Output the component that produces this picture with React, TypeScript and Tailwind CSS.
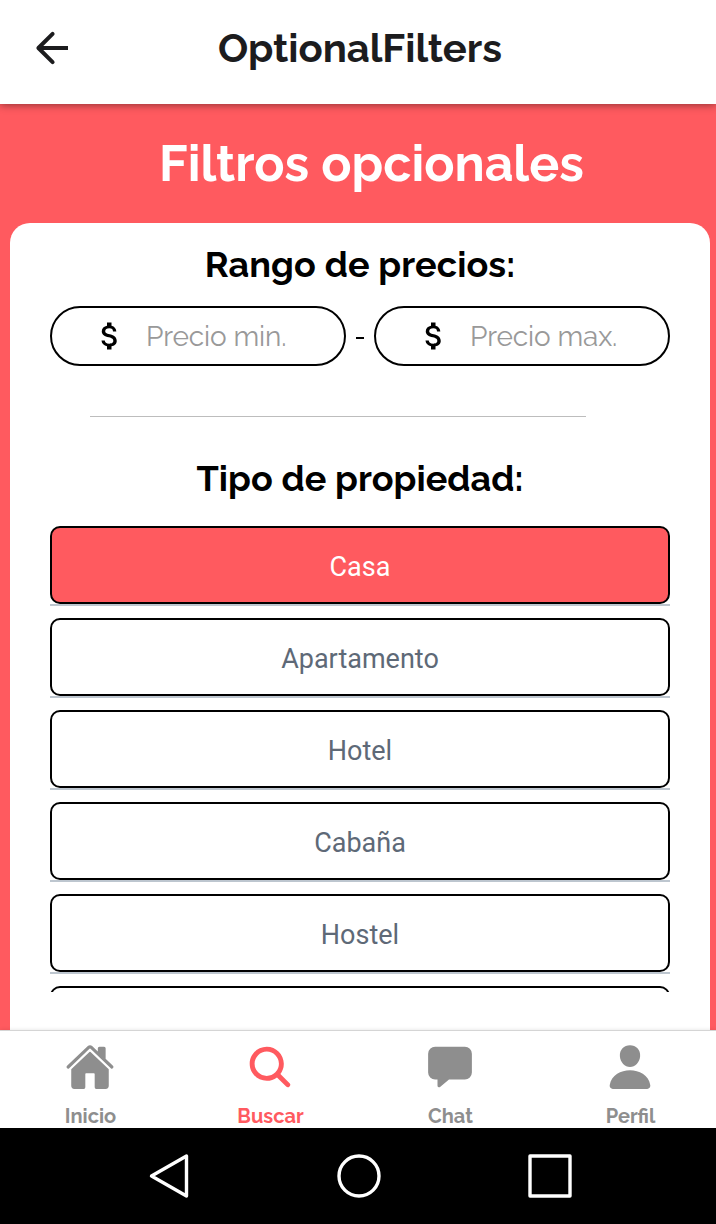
import React from "react";
import { MdAttachMoney } from "react-icons/md";
import { IoHome, IoSearch, IoChatbox, IoPerson } from "react-icons/io5";

const types = ["Casa", "Apartamento", "Hotel", "Cabaña", "Hostel", ""];

const tabs = [
  { label: "Inicio", Icon: IoHome },
  { label: "Buscar", Icon: IoSearch },
  { label: "Chat", Icon: IoChatbox },
  { label: "Perfil", Icon: IoPerson },
];

function PriceInput({ label }: { label: string }) {
  return (
    <div className="flex h-[60px] w-[296px] items-center rounded-full border-2 border-black pl-10">
      <MdAttachMoney className="size-9 shrink-0" />
      <span className="ml-[18px] mt-0.5 whitespace-nowrap text-[28px] leading-8 tracking-[-0.15px] text-[#999999]">{label}</span>
    </div>
  );
}

export default function App() {
  return (
    <div className="flex h-[1224px] w-[716px] flex-col overflow-hidden bg-[#ff5a5f] font-['Raleway','Lato',sans-serif] text-black">
      <header className="relative z-10 flex h-[104px] shrink-0 items-center bg-white pb-2 pl-7 shadow-[0_1px_8px_rgba(0,0,0,0.45)]">
        <svg viewBox="0 0 48 48" className="size-12 shrink-0" fill="none" stroke="#1c1c1e" strokeWidth="4">
          <path d="M40 24H11" />
          <path d="M24.6 9.8 10.4 24l14.2 14.2" strokeLinejoin="round" strokeLinecap="round" />
        </svg>
        <h1 className="ml-[142px] whitespace-nowrap text-[40px] font-bold leading-[48px] tracking-[-0.05px] text-[#1c1c1e]">OptionalFilters</h1>
      </header>

      <main className="flex min-h-0 flex-1 flex-col">
        <h2 className="ml-[159px] mt-[30px] h-[60px] whitespace-nowrap text-[50px] font-bold leading-[60px] text-white">Filtros opcionales</h2>
        <section className="ml-[10px] mt-[29px] flex min-h-0 w-[700px] flex-1 flex-col rounded-t-[20px] bg-white px-10">
          <h3 className="mt-[19px] text-center text-[36px] font-bold leading-[44px] tracking-[0.1px]">Rango de precios:</h3>
          <div className="mt-5 flex items-center justify-between">
            <PriceInput label="Precio min." />
            <span className="mt-1 h-[2px] w-2 bg-black" />
            <PriceInput label="Precio max." />
          </div>
          <div className="ml-10 mt-[50px] h-px w-[496px] shrink-0 bg-[#bdbdbd]" />
          <h3 className="mt-[39px] text-center text-[36px] font-bold leading-[44px] tracking-[0.05px]">Tipo de propiedad:</h3>
          <ul className="mt-[26px] flex h-[466px] shrink-0 flex-col gap-3 overflow-hidden">
            {types.map((t, i) => (
              <li key={i} className="h-20 shrink-0 border-b-2 border-[#bdc6cf]">
                <button
                  className={
                    "flex h-[78px] w-full items-center justify-center rounded-[10px] border-2 border-black pt-1 font-['Roboto',sans-serif] text-[27px] leading-8 " +
                    (i === 0 ? "bg-[#ff5a5f] text-white" : "bg-white text-[#5e6977]")
                  }
                >
                  {t}
                </button>
              </li>
            ))}
          </ul>
        </section>
      </main>

      <nav className="relative z-10 flex h-[98px] shrink-0 border-t border-[#d5d5d5] bg-white shadow-[0_0_4px_rgba(0,0,0,0.12)]">
        {tabs.map(({ label, Icon }) => (
          <div
            key={label}
            className={"flex w-[180px] shrink-0 flex-col items-center pt-[11px] " + (label === "Buscar" ? "text-[#ff5a5f]" : "text-[#8e8e8e]")}
          >
            <Icon className="size-[50px]" />
            <span className="mt-3 pl-px text-[20px] font-bold leading-6">{label}</span>
          </div>
        ))}
      </nav>

      <footer className="flex h-24 shrink-0 bg-black">
        <svg viewBox="0 0 716 96" className="h-24 w-[716px]" fill="none" stroke="white" strokeWidth="3.4">
          <path d="M186.5 28v40L151.500 48Z" strokeLinejoin="round" />
          <circle cx="359" cy="48" r="20" />
          <path d="M530 28h40v40h-40Z" strokeLinejoin="round" />
        </svg>
      </footer>
    </div>
  );
}
